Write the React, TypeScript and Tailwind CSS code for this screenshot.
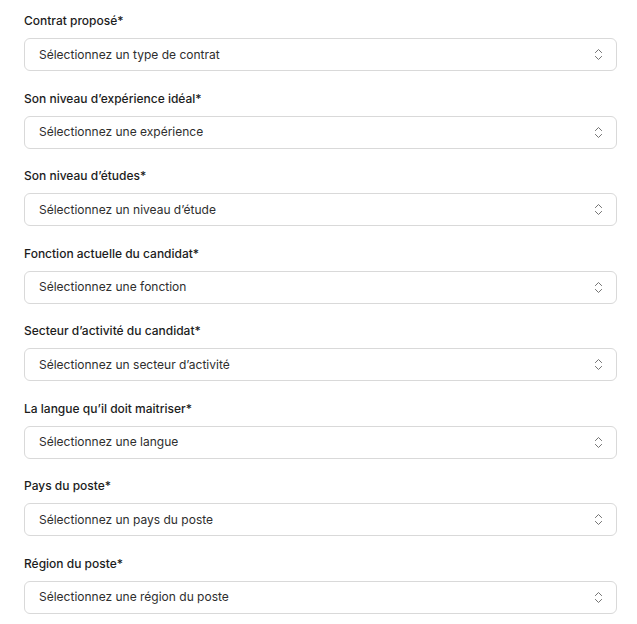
import { ChevronsUpDown } from "lucide-react"

const fields = [
  { label: "Contrat proposé*", placeholder: "Sélectionnez un type de contrat" },
  { label: "Son niveau d’expérience idéal*", placeholder: "Sélectionnez une expérience" },
  { label: "Son niveau d’études*", placeholder: "Sélectionnez un niveau d’étude" },
  { label: "Fonction actuelle du candidat*", placeholder: "Sélectionnez une fonction" },
  { label: "Secteur d’activité du candidat*", placeholder: "Sélectionnez un secteur d’activité" },
  { label: "La langue qu’il doit maitriser*", placeholder: "Sélectionnez une langue" },
  { label: "Pays du poste*", placeholder: "Sélectionnez un pays du poste" },
  { label: "Région du poste*", placeholder: "Sélectionnez une région du poste" },
]

export default function App() {
  return (
    <div className="min-h-screen bg-white pt-[11px] pl-6 pr-5 font-['Inter',sans-serif]">
      <div className="flex flex-col gap-[17.5px]">
        {fields.map((f) => (
          <div key={f.label} className="flex flex-col">
            <label className="h-5 text-[12px] leading-5 font-medium text-[#1c1c1c] mb-[7px]">
              {f.label}
            </label>
            <button
              type="button"
              className="flex h-[33px] w-full items-center justify-between rounded-md border border-[#d9d9d9] bg-white pl-[14px] pr-[10px] text-left text-[12px] text-[#2e2e2e]"
            >
              <span>{f.placeholder}</span>
              <ChevronsUpDown className="h-[15px] w-[15px] text-[#6b6b6b]" strokeWidth={1.5} />
            </button>
          </div>
        ))}
      </div>
    </div>
  )
}
